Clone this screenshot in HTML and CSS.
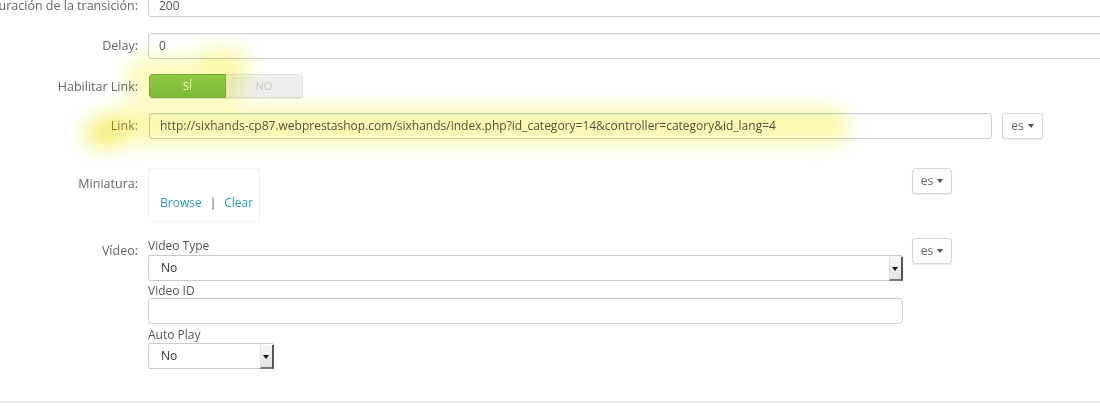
FILE: index.html
```html
<!DOCTYPE html>
<html lang="es">
<head>
<meta charset="utf-8">
<title>Slide form</title>
<link rel="stylesheet" href="styles.css">
</head>
<body>
<div class="page">
  <form class="form">
    <div class="row row-first">
      <label class="lbl"><span>Duración de la transición:</span></label>
      <div class="field"><div class="input wide first-input">200</div></div>
    </div>
    <div class="row row-delay">
      <label class="lbl"><span>Delay:</span></label>
      <div class="field"><div class="input wide">0</div></div>
    </div>
    <div class="row row-switch">
      <label class="lbl"><span>Habilitar Link:</span></label>
      <div class="field">
        <div class="switch">
          <span class="sw-on">SÍ</span>
          <span class="sw-off">NO</span>
        </div>
      </div>
    </div>
    <div class="row row-link">
      <label class="lbl lbl-hl"><span>Link:</span></label>
      <div class="field link-field">
        <div class="input link-input">http://sixhands-cp87.webprestashop.com/sixhands/index.php?id_category=14&amp;controller=category&amp;id_lang=4</div>
        <button type="button" class="lang">es <span class="caret"></span></button>
      </div>
    </div>
    <div class="row row-mini">
      <label class="lbl lbl-mini"><span>Miniatura:</span></label>
      <div class="field lang-field">
        <div class="col">
          <div class="thumb">
            <a class="lnk">Browse</a><span class="sep">|</span><a class="lnk">Clear</a>
          </div>
        </div>
        <button type="button" class="lang">es <span class="caret"></span></button>
      </div>
    </div>
    <div class="row row-video">
      <label class="lbl"><span>Vídeo:</span></label>
      <div class="field lang-field">
        <div class="col">
          <div class="sub sub-type">Video Type</div>
          <div class="select sel-type"><span>No</span><span class="arrow"></span></div>
          <div class="sub sub-id">Video ID</div>
          <div class="input vid-input"></div>
          <div class="sub sub-auto">Auto Play</div>
          <div class="select sel-auto"><span>No</span><span class="arrow"></span></div>
        </div>
        <button type="button" class="lang">es <span class="caret"></span></button>
      </div>
    </div>
  </form>
  <div class="footer-line"></div>
  <div class="hl hl-switch"></div>
  <div class="hl hl-switch2"></div>
  <div class="hl hl-link"></div>
  <div class="hl hl-link-tip"></div>
</div>
</body>
</html>
```
FILE: styles.css
```css
html, body {
  margin: 0;
  padding: 0;
  background: #fff;
  overflow: hidden;
}
body {
  font-family: "Open Sans", "DejaVu Sans", sans-serif;
  font-size: 12px;
  color: #555;
  width: 1100px;
  height: 407px;
}
.page {
  position: relative;
  width: 1100px;
  height: 407px;
  overflow: hidden;
}
.form {
  margin-top: -9px;
  display: flex;
  flex-direction: column;
}
.row {
  display: flex;
  align-items: flex-start;
}
.row-first { margin-top: 0; }
.row-delay { margin-top: 12px; }
.row-switch { margin-top: 15px; }
.row-link { margin-top: 13px; }
.row-mini { margin-top: 29px; }
.row-video { margin-top: 16px; }

.lbl {
  flex: 0 0 148px;
  box-sizing: border-box;
  padding-right: 10px;
  display: flex;
  justify-content: flex-end;
  overflow: hidden;
  line-height: 26px;
  font-size: 12.5px;
  color: #666;
  white-space: nowrap;
}
.lbl span { flex: 0 0 auto; }
.row-first .lbl { line-height: 30px; }
.lbl-hl { color: #8a8a62; }
.lbl-mini { padding-top: 3px; }

.field {
  flex: 1 1 auto;
  display: flex;
  align-items: flex-start;
}
.input {
  box-sizing: border-box;
  height: 26px;
  line-height: 24px;
  padding: 0 10px;
  border: 1px solid #c7d2d6;
  border-radius: 3px;
  background: #fff;
  color: #555;
  white-space: nowrap;
  overflow: hidden;
  box-shadow: inset 0 1px 1px rgba(0,0,0,0.05);
}
.wide { width: 1000px; }
.first-input { padding-top: 2px; }

.switch {
  display: flex;
  width: 154px;
  height: 24px;
  margin-left: 1px;
  border-radius: 3px;
  overflow: hidden;
  box-shadow: 0 1px 1px rgba(0,0,0,0.1);
}
.switch span {
  flex: 1 1 50%;
  box-sizing: border-box;
  text-align: center;
  line-height: 22px;
  font-size: 11px;
}
.sw-on {
  background: linear-gradient(#92cd5c, #7fbd48);
  color: #fff;
  border: 1px solid #76ad45;
  border-radius: 3px 0 0 3px;
}
.sw-off {
  background: #eeeeee;
  color: #c8c8c8;
  border: 1px solid #e2e2e2;
  border-left: none;
  border-radius: 0 3px 3px 0;
}

.link-field { padding-left: 1px; }
.link-input { width: 843px; }
.lang {
  box-sizing: border-box;
  height: 26px;
  width: 41px;
  margin-left: 10px;
  padding: 0 0 1px;
  border: 1px solid #d3d8db;
  border-radius: 3px;
  background: #fff;
  color: #666;
  font-family: "Open Sans", "DejaVu Sans", sans-serif;
  font-size: 12px;
  box-shadow: 0 1px 1px rgba(0,0,0,0.08);
  display: flex;
  align-items: center;
  justify-content: center;
  gap: 4px;
}
.caret {
  display: inline-block;
  width: 0;
  height: 0;
  margin-top: 1px;
  border-left: 3.5px solid transparent;
  border-right: 3.5px solid transparent;
  border-top: 4px solid #555;
}
.lang-field .lang {
  width: 40px;
  margin-left: 9px;
}

.col {
  flex: 0 0 755px;
  display: flex;
  flex-direction: column;
  align-items: flex-start;
}
.thumb {
  box-sizing: border-box;
  width: 112px;
  height: 54px;
  border: 1px solid #eef0f1;
  padding: 25px 0 0 11px;
  line-height: 18px;
  white-space: nowrap;
}
.lnk {
  color: #2b9bc0;
  text-decoration: none;
}
.sep {
  color: #555;
  margin: 0 8px;
}

.sub {
  color: #555;
  line-height: 15px;
}
.sub-type { margin-top: 0; }
.sub-id { margin-top: 2px; }
.sub-auto { margin-top: 3px; }

.select {
  box-sizing: border-box;
  height: 26px;
  border: 1px solid #c9c9c9;
  border-radius: 2px;
  background: #fff;
  display: flex;
  align-items: stretch;
  justify-content: space-between;
  padding-left: 12px;
  line-height: 24px;
  color: #333;
}
.sel-type { width: 755px; margin-top: 2px; }
.sel-auto { width: 126px; margin-top: 1px; }
.arrow {
  position: relative;
  width: 11px;
  background: linear-gradient(#f8f8f8, #e2e2e2);
  border-left: 1px solid #e0e0e0;
  border-right: 2px solid #555;
  border-bottom: 2px solid #777;
  margin: 1px -1px -1px 0;
}
.arrow::after {
  content: "";
  position: absolute;
  left: 2px;
  top: 10px;
  border-left: 3.5px solid transparent;
  border-right: 3.5px solid transparent;
  border-top: 4px solid #111;
}
.vid-input { width: 755px; height: 26px; }

.footer-line {
  position: absolute;
  left: 0;
  right: 0;
  top: 401px;
  height: 2px;
  background: #e8e8e8;
}

.hl {
  position: absolute;
  mix-blend-mode: multiply;
  filter: blur(10px);
  border-radius: 20px;
  pointer-events: none;
}
.hl-switch {
  left: 125px;
  top: 56px;
  width: 120px;
  height: 48px;
  background: rgba(246, 240, 70, 0.36);
}
.hl-switch2 {
  left: 200px;
  top: 48px;
  width: 50px;
  height: 24px;
  background: rgba(246, 240, 70, 0.3);
}
.hl-link {
  left: 100px;
  top: 108px;
  width: 750px;
  height: 36px;
  background: rgba(246, 240, 70, 0.45);
}
.hl-link-tip {
  left: 82px;
  top: 120px;
  width: 40px;
  height: 28px;
  background: rgba(240, 232, 40, 0.5);
}
```
